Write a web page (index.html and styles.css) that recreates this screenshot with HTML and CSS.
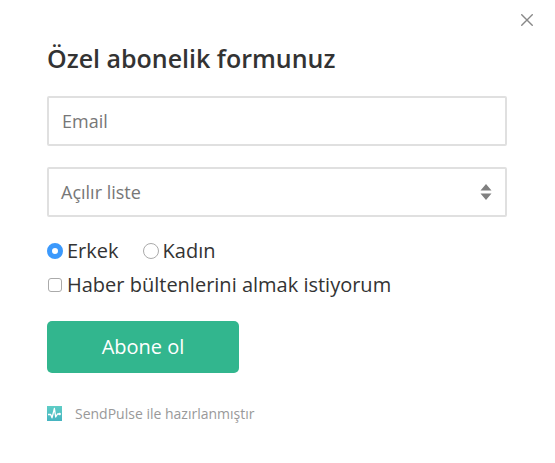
FILE: index.html
```html
<!DOCTYPE html>
<html lang="tr">
<head>
    <meta charset="UTF-8">
    <meta name="viewport" content="width=device-width, initial-scale=1.0">
    <title>Özel abonelik formunuz</title>
    <link rel="stylesheet" href="styles.css">
</head>
<body>
    <div class="popup">
        <button class="close-btn" type="button" aria-label="Kapat">
            <svg width="12" height="12" viewBox="0 0 12 12"><path d="M0.3 0.3L11.7 11.7M11.7 0.3L0.3 11.7"/></svg>
        </button>
        <form class="subscribe-form">
            <h1 class="form-title">Özel abonelik formunuz</h1>
            <input class="field" type="email" placeholder="Email">
            <div class="field select-field">
                <span>Açılır liste</span>
                <svg width="12" height="16" viewBox="0 0 12 16"><path d="M6 0L11.5 6.5H0.5ZM0.5 9.5H11.5L6 16Z"/></svg>
            </div>
            <div class="radio-row">
                <label class="option"><input class="radio" type="radio" name="gender" checked>Erkek</label>
                <label class="option"><input class="radio" type="radio" name="gender">Kadın</label>
            </div>
            <label class="option"><input class="checkbox" type="checkbox">Haber bültenlerini almak istiyorum</label>
            <button class="submit-btn" type="button">Abone ol</button>
            <div class="powered">
                <svg width="15" height="15" viewBox="0 0 15 15">
                    <defs>
                        <linearGradient id="logoFill" x1="0" y1="0" x2="0" y2="1">
                            <stop offset="0" stop-color="#5fcdc6"/>
                            <stop offset="1" stop-color="#45b4c0"/>
                        </linearGradient>
                    </defs>
                    <rect width="15" height="15" fill="url(#logoFill)"/>
                    <path d="M1 8.5H3.7L5 11.8L7.4 2.5L8.7 11L10.5 8H13" fill="none" stroke="#fff" stroke-width="1.3" stroke-linejoin="round"/>
                    <circle cx="12.7" cy="8" r="1.2" fill="#fff"/>
                </svg>
                <span>SendPulse ile hazırlanmıştır</span>
            </div>
        </form>
    </div>
</body>
</html>
```
FILE: styles.css
```css
* {
    box-sizing: border-box;
}
body {
    margin: 0;
    background-color: #fff;
    font-family: "Open Sans", sans-serif;
    color: #333;
}
.popup {
    display: flex;
    flex-direction: column;
    height: 463px;
}
.close-btn {
    align-self: flex-end;
    width: 14px;
    height: 14px;
    margin: 13px 21px 0 0;
    padding: 1px;
    border: none;
    background: none;
    cursor: pointer;
}
.close-btn svg {
    display: block;
    fill: none;
    stroke: #888;
    stroke-width: 1.4;
}
.subscribe-form {
    width: 460px;
    margin: 14px 0 0 47px;
}
.form-title {
    margin: 0 0 20px;
    font-size: 25px;
    font-weight: 600;
    line-height: 35px;
}
.field {
    display: block;
    width: 100%;
    height: 50px;
    margin-bottom: 21px;
    padding: 0 13px;
    border: 2px solid #e0e0e0;
    border-radius: 2px;
    background-color: #fff;
    font-family: inherit;
    font-size: 18px;
    color: #777;
}
.field::placeholder {
    color: #777;
}
.select-field {
    display: flex;
    justify-content: space-between;
    align-items: center;
    margin-bottom: 17px;
    padding-left: 12px;
}
.select-field svg {
    fill: #808080;
}
.radio-row {
    display: flex;
    gap: 24px;
}
.option {
    display: flex;
    align-items: center;
    height: 34px;
    font-size: 20px;
    line-height: 26px;
}
.radio,
.checkbox {
    appearance: none;
    flex: none;
    margin: 0;
    border: 1px solid #aaa;
    background-color: #fff;
}
.radio {
    width: 16px;
    height: 16px;
    margin-right: 4px;
    border-radius: 50%;
}
.radio:checked {
    border: 5px solid #3b99fc;
}
.checkbox {
    width: 14px;
    height: 14px;
    margin: 0 5px 0 1px;
    border-radius: 3px;
}
.submit-btn {
    display: block;
    width: 192px;
    height: 52px;
    margin-top: 19px;
    padding-bottom: 3px;
    border: none;
    border-radius: 5px;
    background-color: #32b68e;
    color: #fff;
    font-family: inherit;
    font-size: 20px;
    cursor: pointer;
}
.powered {
    display: flex;
    align-items: center;
    gap: 13px;
    height: 20px;
    margin-top: 30px;
    font-size: 14px;
    color: #999;
}
```
